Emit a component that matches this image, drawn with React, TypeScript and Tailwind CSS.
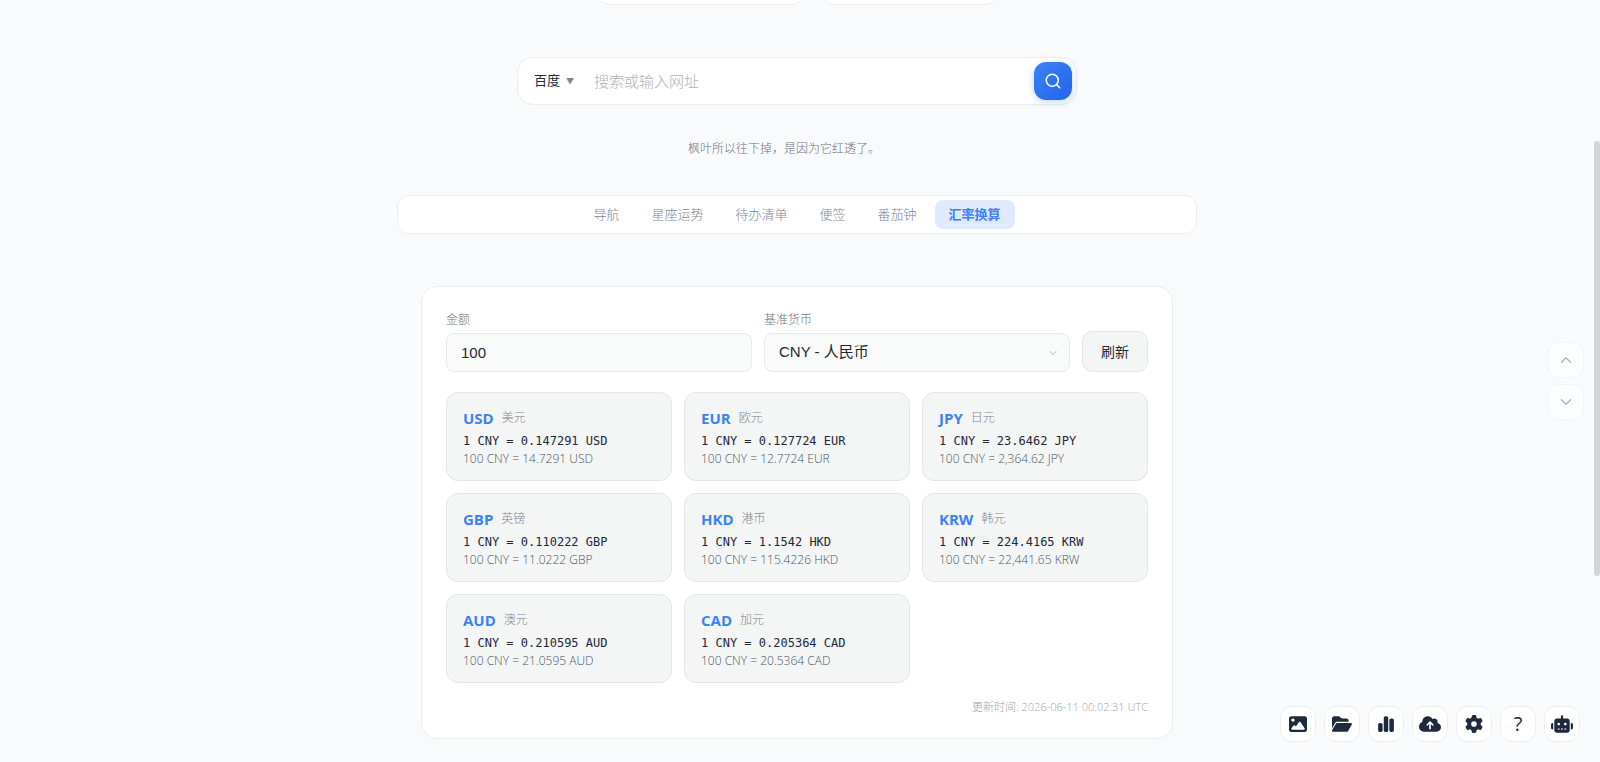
import { useState } from "react";
import type { ReactNode } from "react";
import {
  FaChartSimple,
  FaCloudArrowUp,
  FaFolderOpen,
  FaGear,
  FaImage,
  FaRobot,
} from "react-icons/fa6";
import { ChevronDown, ChevronUp, Search } from "lucide-react";

const TABS = ["导航", "星座运势", "待办清单", "便签", "番茄钟", "汇率换算"];

const RATES = [
  { code: "USD", name: "美元", unit: "0.147291", total: "14.7291" },
  { code: "EUR", name: "欧元", unit: "0.127724", total: "12.7724" },
  { code: "JPY", name: "日元", unit: "23.6462", total: "2,364.62" },
  { code: "GBP", name: "英镑", unit: "0.110222", total: "11.0222" },
  { code: "HKD", name: "港币", unit: "1.1542", total: "115.4226" },
  { code: "KRW", name: "韩元", unit: "224.4165", total: "22,441.65" },
  { code: "AUD", name: "澳元", unit: "0.210595", total: "21.0595" },
  { code: "CAD", name: "加元", unit: "0.205364", total: "20.5364" },
];

const TOOLS: { label: string; icon: ReactNode }[] = [
  { label: "壁纸", icon: <FaImage size={18} /> },
  { label: "文件", icon: <FaFolderOpen size={20} /> },
  { label: "统计", icon: <FaChartSimple size={18} /> },
  { label: "同步", icon: <FaCloudArrowUp size={22} /> },
  { label: "设置", icon: <FaGear size={18} /> },
  { label: "帮助", icon: <span className="text-xl leading-none font-normal">?</span> },
  { label: "助手", icon: <FaRobot size={22} /> },
];

function SearchBar() {
  return (
    <form
      className="flex w-full max-w-[560px] items-center rounded-2xl border border-[#eceeee] bg-white p-1"
      onSubmit={(e) => e.preventDefault()}
    >
      <button type="button" className="flex items-center gap-1.5 px-3 text-[13px] font-normal text-[#1e293b]">
        百度
        <span className="text-[8px] text-[#7f8591]">▼</span>
      </button>
      <input
        type="text"
        aria-label="搜索"
        placeholder="搜索或输入网址"
        className="h-[38px] min-w-0 flex-1 bg-transparent px-2 text-[15px] outline-none placeholder:text-[#adb1b9]"
      />
      <button
        type="submit"
        aria-label="搜索"
        className="flex size-[38px] items-center justify-center rounded-xl bg-linear-135 from-[#3b82f6] to-[#2563eb] text-white shadow-[0_2px_8px_rgba(59,130,246,0.3)]"
      >
        <Search size={18} strokeWidth={2} />
      </button>
    </form>
  );
}

function Tabs() {
  const [active, setActive] = useState("汇率换算");
  return (
    <nav className="flex w-full max-w-[800px] justify-center gap-1 rounded-xl border border-[#eceeee] bg-white p-1">
      {TABS.map((tab) => (
        <button
          key={tab}
          type="button"
          onClick={() => setActive(tab)}
          className={
            tab === active
              ? "rounded-lg bg-[#e0eafe] px-3.5 py-1 text-[13px] leading-[21px] font-semibold text-[#3b82f6]"
              : "rounded-lg px-3.5 py-1 text-[13px] leading-[21px] text-[#7f8591]"
          }
        >
          {tab}
        </button>
      ))}
    </nav>
  );
}

function Converter() {
  const field =
    "h-[39px] w-full rounded-lg border border-[#e8eaea] bg-[#f9fafa] px-3.5 font-['Liberation_Sans','Noto_Sans_CJK_SC',sans-serif] text-[15px] font-normal text-[#1e293b] outline-none";
  return (
    <section className="w-full max-w-[752px] rounded-2xl border border-[#eceeee] bg-white p-6">
      <div className="flex items-end gap-3">
        <div className="flex flex-1 flex-col gap-1">
          <label htmlFor="amount" className="text-xs leading-[18px] text-[#6b7280]">
            金额
          </label>
          <input id="amount" type="text" inputMode="decimal" defaultValue="100" className={field} />
        </div>
        <div className="flex flex-1 flex-col gap-1">
          <label htmlFor="base" className="text-xs leading-[18px] text-[#6b7280]">
            基准货币
          </label>
          <div className="relative">
            <select id="base" className={`${field} appearance-none`}>
              <option>CNY - 人民币</option>
            </select>
            <ChevronDown
              size={12}
              className="pointer-events-none absolute inset-y-0 right-[11px] my-auto text-[#b3b7be]"
            />
          </div>
        </div>
        <button
          type="button"
          className="h-[41px] rounded-[10px] border border-[#e4e6e6] bg-[#f4f5f5] px-[18px] text-sm font-normal text-[#1e293b]"
        >
          刷新
        </button>
      </div>

      <ul className="mt-5 grid grid-cols-3 gap-3">
        {RATES.map((rate) => (
          <li key={rate.code} className="rounded-xl border border-[#e4e7e6] bg-[#f4f5f5] px-4 pt-3.5 pb-[13px]">
            <div className="mb-1 flex items-center gap-2">
              <span className="text-[15px] leading-[22px] font-bold text-[#3b82f6]">{rate.code}</span>
              <span className="text-xs leading-[22px] text-[#7f8591]">{rate.name}</span>
            </div>
            <p className="font-['DejaVu_Sans_Mono',monospace] text-xs leading-4 font-normal text-[#1e293b]">
              1 CNY = {rate.unit} {rate.code}
            </p>
            <p className="mt-0.5 text-xs leading-4 text-[#4b5563]">
              100 CNY = {rate.total} {rate.code}
            </p>
          </li>
        ))}
      </ul>

      <p className="mt-4 text-right text-[11px] leading-[15px] text-[#9ca3af]">更新时间: 2026-06-11 00:02:31 UTC</p>
    </section>
  );
}

export default function App() {
  return (
    <div className="min-h-screen bg-[#f9fafc] pr-1.5 font-['Open_Sans','Noto_Sans_CJK_SC',sans-serif] font-light text-[#1e293b]">
      <main className="flex flex-col items-center pb-[23px]">
        <div className="flex gap-3">
          <div className="h-[5px] w-[213px] overflow-hidden">
            <div className="-mt-9 h-[41px] rounded-2xl border border-[#eceeee] bg-white" />
          </div>
          <div className="h-[5px] w-[181px] overflow-hidden">
            <div className="-mt-9 h-[41px] rounded-2xl border border-[#eceeee] bg-white" />
          </div>
        </div>
        <div className="mt-[52px] flex w-full justify-center">
          <SearchBar />
        </div>
        <p className="mt-[34px] pr-[26px] text-xs leading-5 text-[#6b7280]">枫叶所以往下掉，是因为它红透了。</p>
        <div className="mt-9 flex w-full justify-center">
          <Tabs />
        </div>
        <div className="mt-[52px] flex w-full justify-center">
          <Converter />
        </div>
      </main>

      <div className="fixed top-1/2 right-4 flex -translate-y-1/2 flex-col gap-1.5 opacity-50">
        <button
          type="button"
          aria-label="向上"
          className="flex size-9 items-center justify-center rounded-[10px] border border-[#eceeee] bg-white text-[#6b7280]"
        >
          <ChevronUp size={18} />
        </button>
        <button
          type="button"
          aria-label="向下"
          className="flex size-9 items-center justify-center rounded-[10px] border border-[#eceeee] bg-white text-[#6b7280]"
        >
          <ChevronDown size={18} />
        </button>
      </div>

      <div className="fixed right-5 bottom-5 flex gap-2">
        {TOOLS.map((tool) => (
          <button
            key={tool.label}
            type="button"
            aria-label={tool.label}
            className="flex size-9 items-center justify-center rounded-xl border border-[#eceeee] bg-white text-[#1e293b]"
          >
            {tool.icon}
          </button>
        ))}
      </div>

      <div className="fixed top-[141px] right-0 h-[435px] w-1.5 rounded-full bg-[#d2d4d7]" />
    </div>
  );
}
